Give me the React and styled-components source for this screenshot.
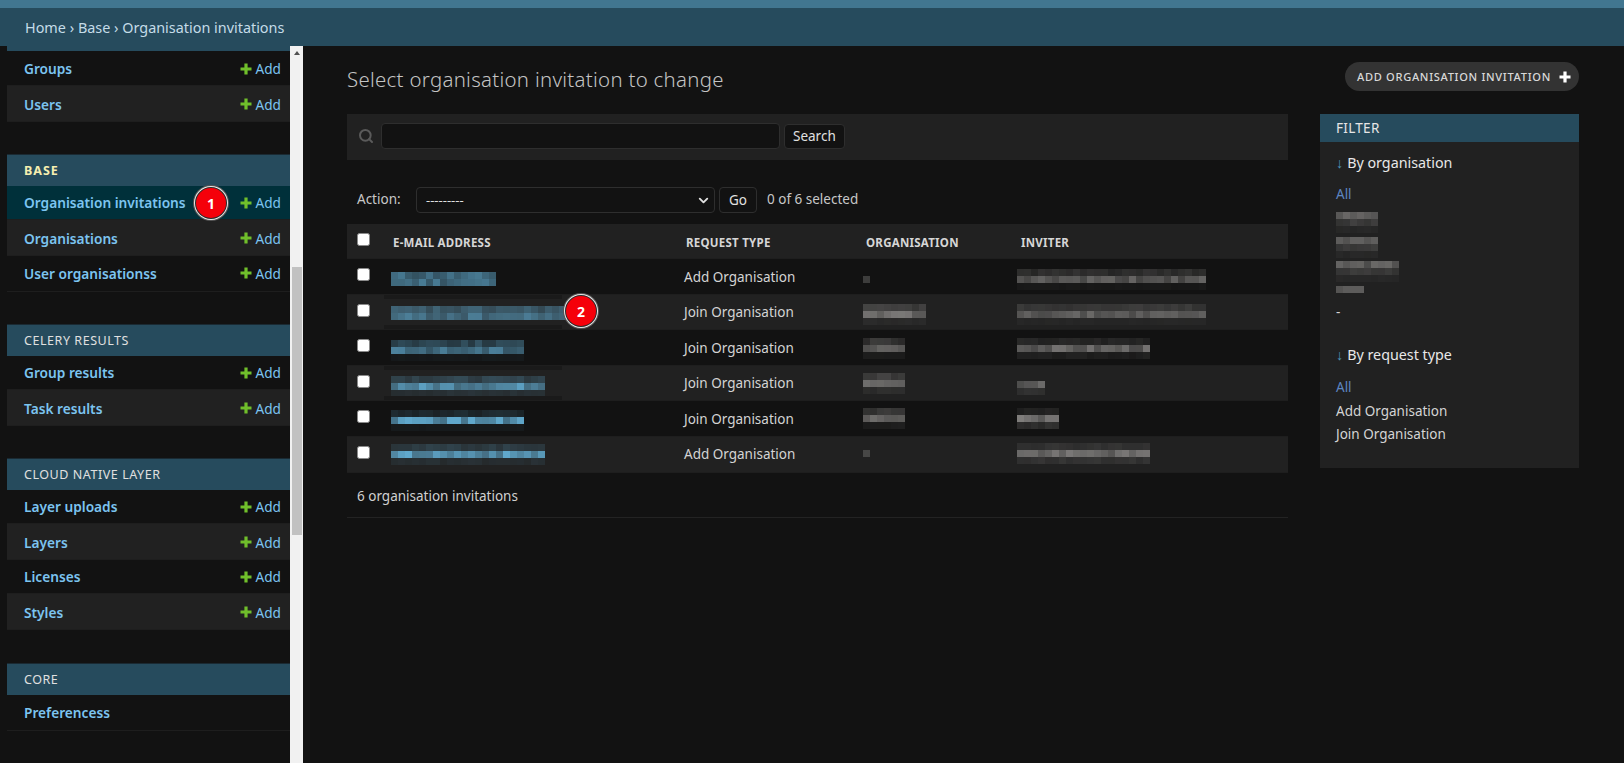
import React from "react";
import styled, { createGlobalStyle } from "styled-components";
import { Search as SearchIcon, ChevronDown } from "lucide-react";

const Global = createGlobalStyle`
  html, body { margin: 0; padding: 0; height: 763px; overflow: hidden; background: #121212; }
  body { font-family: "Noto Sans", "Open Sans", sans-serif; font-size: 14px; color: #e0e0e0; }
  * { box-sizing: border-box; }
`;

const Page = styled.div`position: relative; width: 1624px; height: 763px; overflow: hidden; display: flex; flex-direction: column; background: #121212;`;
const TopStrip = styled.div`height: 8px; flex: none; background: #417690;`;
const Breadcrumbs = styled.div`height: 38px; flex: none; background: #264b5d; color: #c4dce8; padding: 0 0 0 25px; display: flex; align-items: center; font-size: 14.4px;`;
const Body = styled.div`flex: 1; min-height: 0; display: flex; padding-left: 7px;`;
const Sidebar = styled.nav`width: 283px; flex: none; overflow: hidden; background: #121212;`;
const SidebarCap = styled.div`height: 5px; margin-bottom: 1px; background: #264b5d;`;
const AppBlock = styled.section`margin-bottom: ${p => p.$gap || 32}px;`;
const AppHeader = styled.div`
  height: 32px; background: #264b5d; border-top: 1px solid #1a2a33; padding-left: 17px; display: flex; align-items: center;
  font-size: 12.5px; letter-spacing: ${p => (p.$current ? "1px" : "0.55px")}; text-transform: uppercase;
  font-weight: ${p => (p.$current ? 700 : 400)}; color: ${p => (p.$current ? "#f6eeb0" : "#e0e0e0")};
`;
const ModelRow = styled.div`
  position: relative; height: ${p => (p.$alt ? 36 : 34)}px; padding: ${p => (p.$alt ? 1 : 0)}px 9px 0 17px; display: flex; align-items: center; justify-content: space-between;
  background: ${p => (p.$current ? "#00303a" : p.$alt ? "#212121" : "#121212")}; border-bottom: 1px solid #1e1e1e;
  &:last-child { height: 36px; padding-top: ${p => (p.$alt ? 1 : 0)}px; padding-bottom: ${p => (p.$alt ? 0 : 1)}px; }
`;
const ModelName = styled.a`color: #7cc4f0; font-weight: 600; font-size: 13.7px;`;
const AddLink = styled.a`color: #7cc4f0; font-size: 13.6px; display: flex; align-items: center; gap: 4px;`;
const Scrollbar = styled.div`width: 13px; flex: none; background: #f1f1f1; display: flex; flex-direction: column; align-items: center; margin-right: 44px;`;
const ScrollArrow = styled.div`margin-top: 5px; width: 0; height: 0; border-left: 3px solid transparent; border-right: 3px solid transparent; border-bottom: 4px solid #505050;`;
const ScrollThumb = styled.div`margin-top: 212px; width: 10px; height: 268px; background: #c1c1c1;`;
const Content = styled.main`width: 941px; flex: none; padding-top: 16px; margin-right: 32px;`;
const Title = styled.h1`margin: 0 0 18px; height: 34px; line-height: 34px; font-weight: 300; font-size: 20.4px; color: #c4c4c4; letter-spacing: 0.3px;`;
const SearchBar = styled.div`height: 46px; background: #212121; display: flex; align-items: center; padding: 0 0 2px 11px; color: #5a5a5a;`;
const SearchInput = styled.div`width: 399px; height: 26px; margin-left: 7px; margin-right: 4px; background: #121212; border: 1px solid #2e2e2e; border-radius: 4px;`;
const Button = styled.button`height: ${p => p.$h || 25}px; padding: 0 ${p => p.$pad || 9}px; background: #121212; border: 1px solid #2e2e2e; border-radius: 4px; color: #e0e0e0; font-family: inherit; font-size: 13.5px;`;
const Actions = styled.div`height: 64px; padding: 27px 0 0 10px; display: flex; align-items: flex-start; font-size: 13.5px; color: #c8c8c8;`;
const ActionLabel = styled.span`width: 59px; line-height: 25px;`;
const FakeSelect = styled.div`width: 299px; height: 26px; margin-right: 4px; background: #121212; border: 1px solid #2e2e2e; border-radius: 4px; display: flex; align-items: center; justify-content: space-between; padding: 0 3px 0 9px; color: #e0e0e0; font-size: 13px;`;
const Counter = styled.span`margin-left: 10px; line-height: 24px;`;
const GridRow = styled.div`
  display: grid; grid-template-columns: 44px 293px 179px 154px 1fr;
  height: ${p => p.$h || 35.6}px; background: ${p => (p.$alt ? "#212121" : "#121212")};
  border-bottom: 1px solid #1e1e1e; color: #d4d4d4; font-size: 13.5px; overflow: hidden;
`;
const CheckCell = styled.div`padding: ${p => p.$top || 9}px 0 0 10px;`;
const Check = styled.span`display: block; width: 13px; height: 13px; background: #fff; border: 1px solid #8a8a8a; border-radius: 2.5px;`;
const HeadCell = styled.div`padding: 11px 0 0 ${p => p.$pad || 2}px; font-size: 11.5px; font-weight: 700; text-transform: uppercase; letter-spacing: 0.25px; color: #d6d6d6;`;
const TextCell = styled.div`padding: 8.5px 0 0 0;`;
const MosaicCell = styled.div`
  padding-top: ${p => p.$top || 0}px; position: relative;
  ${p => p.$band && `
    &::before, &::after { content: ""; position: absolute; left: -7px; width: 178px; height: 4px; background: #1a1a1a; }
    &::before { top: 0; }
    &::after { bottom: 0; }
  `}
`;
const Summary = styled.div`height: 45px; padding: 14px 0 0 10px; border-bottom: 1px solid #232323; font-size: 13.5px; color: #d0d0d0;`;
const Filter = styled.aside`width: 259px; flex: none; display: flex; flex-direction: column;`;
const AddButton = styled.a`
  align-self: flex-end; margin-top: 16px; height: 29px; width: 234px; border-radius: 15px; background: #333; color: #d8d8d8;
  display: flex; align-items: center; justify-content: space-between; padding: 0 8px 0 12px;
  font-size: 11.1px; font-weight: 500; letter-spacing: 0.68px; text-transform: uppercase;
`;
const FilterPanel = styled.div`margin-top: 23px; height: 354px; background: #212121;`;
const FilterHeader = styled.div`height: 28px; background: #264b5d; padding-left: 16px; display: flex; align-items: center; font-size: 13.5px; letter-spacing: 0.3px; color: #e6e6e6;`;
const FilterGroup = styled.div`padding: ${p => p.$top || 0}px 0 0 16px;`;
const FilterTitle = styled.div`font-size: 14.3px; line-height: 20px; margin-bottom: ${p => p.$mb || 11}px; color: #e8e8e8;`;
const Arrow = styled.span`color: #4f95b8; margin-right: 4px;`;
const FilterItem = styled.div`height: 23.5px; line-height: 23px; margin-top: ${p => p.$mt || 0}px; font-size: 13.5px; color: ${p => (p.$on ? "#5d85c0" : "#d4d4d4")};`;
const MosaicBlock = styled.div`margin-top: ${p => p.$mt || 0}px;`;
const Badge = styled.span`
  position: absolute; width: 30px; height: 30px; border-radius: 50%; left: ${p => p.$x}px; top: ${p => p.$y}px;
  display: flex; align-items: center; justify-content: center; background: #f5000a;
  box-shadow: 0 0 0 1px #2a2a2a, 0 0 0 2px #e8e8e8, 0 0 0 3px #555; color: #fff; font-weight: 700; font-size: 14px; z-index: 2;
`;

const Plus = ({ size = 12, color = "#70bf2b" }) => (
  <svg width={size} height={size} viewBox="0 0 12 12" aria-hidden="true">
    <path d="M4.4 0.5h3.2v3.9h3.9v3.2H7.6v3.9H4.4V7.6H0.5V4.4h3.9z" fill={color} />
  </svg>
);

/* The pixelated redaction blocks of the screenshot. */
function rng(seed) {
  let s = seed;
  return () => { s = (s * 9301 + 49297) % 233280; return s / 233280; };
}
const Mosaic = ({ cols, levels, seed = 1, rgb = "110,110,110", cell = 7 }) => {
  const r = rng(seed);
  const cells = [];
  levels.forEach((lv, y) => {
    for (let x = 0; x < cols; x++) {
      const v = lv * (0.72 + r() * 0.55);
      cells.push(<rect key={`${x}-${y}`} x={x * cell} y={y * cell} width={cell} height={cell} fill={`rgb(${rgb})`} opacity={Math.min(1, v)} />);
    }
  });
  return <svg width={cols * cell} height={levels.length * cell} shapeRendering="crispEdges" style={{ display: "block" }} aria-hidden="true">{cells}</svg>;
};

const BLUE = "96,168,204";
const GREY = "150,148,146";

const apps = [
  { name: "Base", current: true, models: ["Organisation invitations", "Organisations", "User organisationss"] },
  { name: "Celery results", models: ["Group results", "Task results"] },
  { name: "Cloud native layer", gap: 33, models: ["Layer uploads", "Layers", "Licenses", "Styles"] },
  { name: "Core", models: ["Preferencess"], noAdd: true },
];

const rows = [
  { type: "Add Organisation", email: [15, 13, [0.55, 0.6]], org: [1, 17, [0.3]], inv: [27, 10, [0.2, 0.5, 0.05]] },
  { type: "Join Organisation", email: [25, 11, [0.4, 0.55]], org: [9, 9, [0.25, 0.6, 0.08]], inv: [27, 9, [0.2, 0.5, 0.05]], band: true },
  { type: "Join Organisation", email: [19, 10, [0.35, 0.6, 0.05]], org: [6, 8, [0.25, 0.55, 0.08]], inv: [19, 8, [0.15, 0.6, 0.1]] },
  { type: "Join Organisation", email: [22, 10, [0.25, 0.75, 0.12]], org: [6, 7, [0.25, 0.55, 0.1]], inv: [4, 15, [0.55, 0.15]], band: true },
  { type: "Join Organisation", email: [19, 9, [0.15, 0.85, 0.05]], org: [6, 7, [0.25, 0.55, 0.08]], inv: [6, 7, [0.12, 0.65, 0.2]] },
  { type: "Add Organisation", email: [22, 7, [0.2, 0.8, 0.1]], org: [1, 13, [0.3]], inv: [19, 6, [0.15, 0.6, 0.15]] },
];

export default function App() {
  return (
    <Page>
      <Global />
      <TopStrip />
      <Breadcrumbs>Home › Base › Organisation invitations</Breadcrumbs>
      <Body>
        <Sidebar>
          <SidebarCap />
          <AppBlock>
            <ModelRow><ModelName>Groups</ModelName><AddLink><Plus />Add</AddLink></ModelRow>
            <ModelRow $alt><ModelName>Users</ModelName><AddLink><Plus />Add</AddLink></ModelRow>
          </AppBlock>
          {apps.map(app => (
            <AppBlock key={app.name} $gap={app.gap}>
              <AppHeader $current={app.current}>{app.name}</AppHeader>
              {app.models.map((m, i) => (
                <ModelRow key={m} $alt={i % 2 === 1} $current={m === "Organisation invitations"}>
                  <ModelName>{m}</ModelName>
                  {m === "Organisation invitations" && <Badge $x={189} $y={2}>1</Badge>}
                  {!app.noAdd && <AddLink><Plus />Add</AddLink>}
                </ModelRow>
              ))}
            </AppBlock>
          ))}
          <AppHeader />
        </Sidebar>
        <Scrollbar><ScrollArrow /><ScrollThumb /></Scrollbar>
        <Content>
          <Title>Select organisation invitation to change</Title>
          <SearchBar>
            <SearchIcon size={16} strokeWidth={3} />
            <SearchInput />
            <Button $pad={8}>Search</Button>
          </SearchBar>
          <Actions>
            <ActionLabel>Action:</ActionLabel>
            <FakeSelect>---------<ChevronDown size={15} strokeWidth={3} /></FakeSelect>
            <Button $h={26}>Go</Button>
            <Counter>0 of 6 selected</Counter>
          </Actions>
          <GridRow $alt $h={35}>
            <CheckCell $top={9}><Check /></CheckCell>
            <HeadCell>E-mail address</HeadCell>
            <HeadCell>Request type</HeadCell>
            <HeadCell $pad={3}>Organisation</HeadCell>
            <HeadCell $pad={4}>Inviter</HeadCell>
          </GridRow>
          {rows.map((r, i) => (
            <GridRow key={i} $alt={i % 2 === 1}>
              <CheckCell><Check /></CheckCell>
              <MosaicCell $top={r.email[1]} $band={r.band}>
                <Mosaic cols={r.email[0]} levels={r.email[2]} rgb={BLUE} seed={11 + i * 7} />
              </MosaicCell>
              <TextCell>{r.type}</TextCell>
              <MosaicCell $top={r.org[1]}>
                <Mosaic cols={r.org[0]} levels={r.org[2]} rgb={GREY} seed={37 + i * 5} />
              </MosaicCell>
              <MosaicCell $top={r.inv[1]}>
                <Mosaic cols={r.inv[0]} levels={r.inv[2]} rgb={GREY} seed={61 + i * 3} />
              </MosaicCell>
            </GridRow>
          ))}
          <Summary>6 organisation invitations</Summary>
        </Content>
        <Filter>
          <AddButton>Add organisation invitation<Plus size={12} color="#fff" /></AddButton>
          <FilterPanel>
            <FilterHeader>FILTER</FilterHeader>
            <FilterGroup $top={11}>
              <FilterTitle $mb={10}><Arrow>↓</Arrow>By organisation</FilterTitle>
              <FilterItem $on>All</FilterItem>
              <MosaicBlock $mt={5}><Mosaic cols={6} levels={[0.5, 0.22, 0.05]} rgb={GREY} seed={5} /></MosaicBlock>
              <MosaicBlock $mt={4}><Mosaic cols={6} levels={[0.5, 0.22, 0.05]} rgb={GREY} seed={9} /></MosaicBlock>
              <MosaicBlock $mt={3}><Mosaic cols={9} levels={[0.5, 0.2, 0.06]} rgb={GREY} seed={14} /></MosaicBlock>
              <MosaicBlock $mt={4}><Mosaic cols={4} levels={[0.6]} rgb={GREY} seed={21} /></MosaicBlock>
              <FilterItem $mt={8}>-</FilterItem>
            </FilterGroup>
            <FilterGroup $top={21}>
              <FilterTitle><Arrow>↓</Arrow>By request type</FilterTitle>
              <FilterItem $on>All</FilterItem>
              <FilterItem>Add Organisation</FilterItem>
              <FilterItem>Join Organisation</FilterItem>
            </FilterGroup>
          </FilterPanel>
        </Filter>
      </Body>
      <Badge $x={566} $y={296}>2</Badge>
    </Page>
  );
}
